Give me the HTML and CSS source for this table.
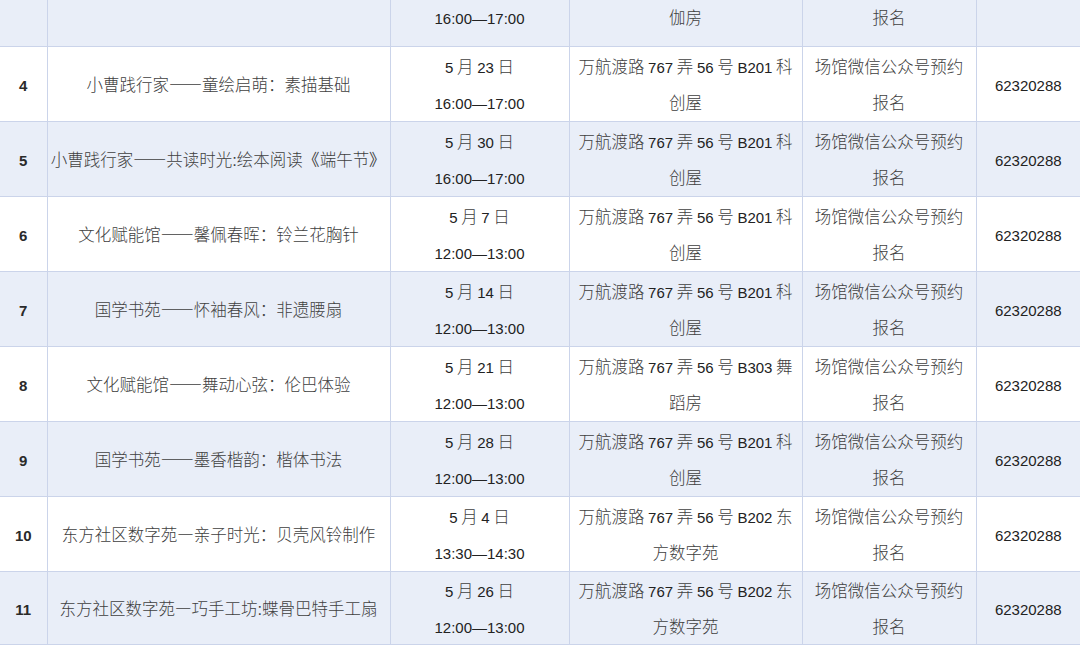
FILE: index.html
```html
<!DOCTYPE html>
<html lang="zh-CN">
<head>
<meta charset="utf-8">
<title>活动安排</title>
<link rel="stylesheet" href="styles.css">
</head>
<body>
<div class="sheet">
<table class="schedule">
<colgroup>
<col class="c-no"><col class="c-name"><col class="c-date"><col class="c-place"><col class="c-book"><col class="c-tel">
</colgroup>
<tbody>
<tr class="alt top">
<td></td>
<td></td>
<td><span class="lat">5</span> 月 <span class="lat">16</span> 日<br><span class="lat">16:00—17:00</span></td>
<td>万航渡路 <span class="lat">767</span> 弄 <span class="lat">56</span> 号 <span class="lat">B303</span> 瑜<br>伽房</td>
<td>场馆微信公众号预约<br>报名</td>
<td></td>
</tr>
<tr>
<td class="no"><span class="lat">4</span></td>
<td class="name">小曹践行家——童绘启萌：素描基础</td>
<td><span class="lat">5</span> 月 <span class="lat">23</span> 日<br><span class="lat">16:00—17:00</span></td>
<td>万航渡路 <span class="lat">767</span> 弄 <span class="lat">56</span> 号 <span class="lat">B201</span> 科<br>创屋</td>
<td>场馆微信公众号预约<br>报名</td>
<td><span class="lat">62320288</span></td>
</tr>
<tr class="alt">
<td class="no"><span class="lat">5</span></td>
<td class="name">小曹践行家——共读时光<span class="pn">:</span>绘本阅读<span class="pn">《</span>端午节<span class="pn">》</span></td>
<td><span class="lat">5</span> 月 <span class="lat">30</span> 日<br><span class="lat">16:00—17:00</span></td>
<td>万航渡路 <span class="lat">767</span> 弄 <span class="lat">56</span> 号 <span class="lat">B201</span> 科<br>创屋</td>
<td>场馆微信公众号预约<br>报名</td>
<td><span class="lat">62320288</span></td>
</tr>
<tr>
<td class="no"><span class="lat">6</span></td>
<td class="name">文化赋能馆——馨佩春晖：铃兰花胸针</td>
<td><span class="lat">5</span> 月 <span class="lat">7</span> 日<br><span class="lat">12:00—13:00</span></td>
<td>万航渡路 <span class="lat">767</span> 弄 <span class="lat">56</span> 号 <span class="lat">B201</span> 科<br>创屋</td>
<td>场馆微信公众号预约<br>报名</td>
<td><span class="lat">62320288</span></td>
</tr>
<tr class="alt">
<td class="no"><span class="lat">7</span></td>
<td class="name">国学书苑——怀袖春风：非遗腰扇</td>
<td><span class="lat">5</span> 月 <span class="lat">14</span> 日<br><span class="lat">12:00—13:00</span></td>
<td>万航渡路 <span class="lat">767</span> 弄 <span class="lat">56</span> 号 <span class="lat">B201</span> 科<br>创屋</td>
<td>场馆微信公众号预约<br>报名</td>
<td><span class="lat">62320288</span></td>
</tr>
<tr>
<td class="no"><span class="lat">8</span></td>
<td class="name">文化赋能馆——舞动心弦：伦巴体验</td>
<td><span class="lat">5</span> 月 <span class="lat">21</span> 日<br><span class="lat">12:00—13:00</span></td>
<td>万航渡路 <span class="lat">767</span> 弄 <span class="lat">56</span> 号 <span class="lat">B303</span> 舞<br>蹈房</td>
<td>场馆微信公众号预约<br>报名</td>
<td><span class="lat">62320288</span></td>
</tr>
<tr class="alt">
<td class="no"><span class="lat">9</span></td>
<td class="name">国学书苑——墨香楷韵：楷体书法</td>
<td><span class="lat">5</span> 月 <span class="lat">28</span> 日<br><span class="lat">12:00—13:00</span></td>
<td>万航渡路 <span class="lat">767</span> 弄 <span class="lat">56</span> 号 <span class="lat">B201</span> 科<br>创屋</td>
<td>场馆微信公众号预约<br>报名</td>
<td><span class="lat">62320288</span></td>
</tr>
<tr>
<td class="no"><span class="lat">10</span></td>
<td class="name">东方社区数字苑—亲子时光：贝壳风铃制作</td>
<td><span class="lat">5</span> 月 <span class="lat">4</span> 日<br><span class="lat">13:30—14:30</span></td>
<td>万航渡路 <span class="lat">767</span> 弄 <span class="lat">56</span> 号 <span class="lat">B202</span> 东<br>方数字苑</td>
<td>场馆微信公众号预约<br>报名</td>
<td><span class="lat">62320288</span></td>
</tr>
<tr class="alt last">
<td class="no"><span class="lat">11</span></td>
<td class="name">东方社区数字苑—巧手工坊<span class="pn">:</span>蝶骨巴特手工扇</td>
<td><span class="lat">5</span> 月 <span class="lat">26</span> 日<br><span class="lat">12:00—13:00</span></td>
<td>万航渡路 <span class="lat">767</span> 弄 <span class="lat">56</span> 号 <span class="lat">B202</span> 东<br>方数字苑</td>
<td>场馆微信公众号预约<br>报名</td>
<td><span class="lat">62320288</span></td>
</tr>
</tbody>
</table>
</div>
</body>
</html>
```

FILE: styles.css
```css
html, body {
  margin: 0;
  padding: 0;
  background: #ffffff;
}

.sheet {
  width: 1080px;
  height: 645px;
  overflow: hidden;
}

.schedule {
  width: 1080px;
  margin-top: -50px;
  border-collapse: collapse;
  table-layout: fixed;
  font-family: "Noto Sans CJK SC", sans-serif;
  font-size: 16.5px;
  font-weight: 300;
  line-height: 36px;
  color: #404040;
}

.c-no { width: 47px; }
.c-name { width: 343px; }
.c-date { width: 179px; }
.c-place { width: 233px; }
.c-book { width: 174px; }
.c-tel { width: 104px; }

.schedule td {
  border: 1px solid #cbd4ea;
  padding: 0 2px;
  text-align: center;
  vertical-align: middle;
  white-space: nowrap;
}

.schedule td:first-child {
  border-left: none;
}

.schedule td:last-child {
  border-right: none;
}

.schedule tr {
  height: 75px;
  background: #ffffff;
}

.schedule tr.alt {
  background: #e9eef8;
}

.schedule tr.top {
  height: 96px;
}

.schedule tr.last {
  height: 73px;
}

.lat {
  font-family: "Liberation Sans", sans-serif;
  font-size: 15px;
  font-weight: 400;
  line-height: 1;
  color: #222222;
}

.no .lat {
  font-weight: 700;
  color: #2a2a2a;
}

.pn {
  font-family: "Liberation Sans", sans-serif;
  line-height: 1;
}
```
